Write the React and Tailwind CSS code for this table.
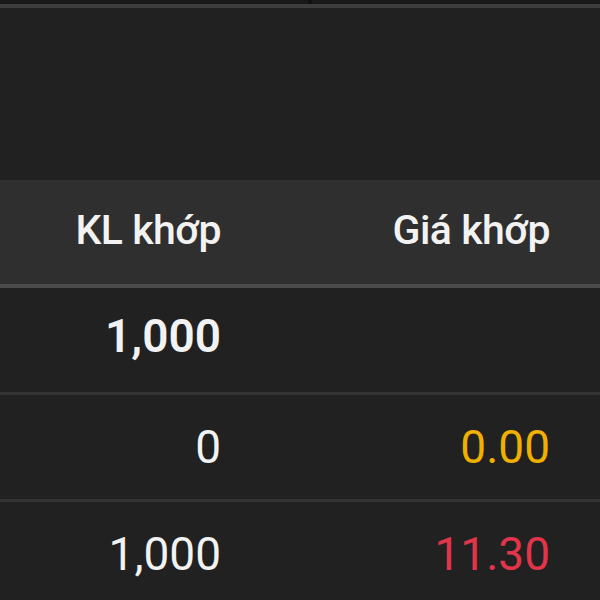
export default function App() {
  const rows = [
    { kl: "1,000", gia: "", cls: "font-semibold", color: "", pad: "pb-[9px]" },
    { kl: "0", gia: "0.00", cls: "font-normal", color: "text-[#f0b000]", pad: "" },
    { kl: "1,000", gia: "11.30", cls: "font-normal", color: "text-[#e2344a]", pad: "" },
  ];
  return (
    <div
      className="w-[600px] h-[600px] bg-[#212121] overflow-hidden flex flex-col text-[#f2f2f2]"
      style={{ fontFamily: "Roboto, 'Noto Sans', sans-serif" }}
    >
      <div className="h-[4px] flex bg-[#191919] shrink-0">
        <div className="w-[308px]" />
        <div className="w-[4px] bg-[#111111]" />
      </div>
      <div className="h-[4px] bg-[#3e3e3e] shrink-0" />
      <div className="h-[172px] shrink-0" />
      <div className="h-[104px] bg-[#2f2f2f] flex items-center shrink-0 text-[41px] font-medium tracking-[-0.5px]">
        <div className="w-[221px] text-right leading-none pb-[4px]">KL khớp</div>
        <div className="w-[329px] text-right leading-none pb-[4px]">Giá khớp</div>
      </div>
      <div className="h-[4px] bg-[#4b4b4b] shrink-0" />
      {rows.map((r, i) => (
        <div
          key={i}
          className={`flex items-center shrink-0 text-[46px] ${r.pad} ${i > 0 ? "h-[107px] border-t-[3px] border-[#333333]" : "h-[104px]"}`}
        >
          <div className={`w-[221px] text-right leading-none ${r.cls}`}>{r.kl}</div>
          <div className={`w-[329px] text-right leading-none ${r.color}`}>{r.gia}</div>
        </div>
      ))}
    </div>
  );
}
